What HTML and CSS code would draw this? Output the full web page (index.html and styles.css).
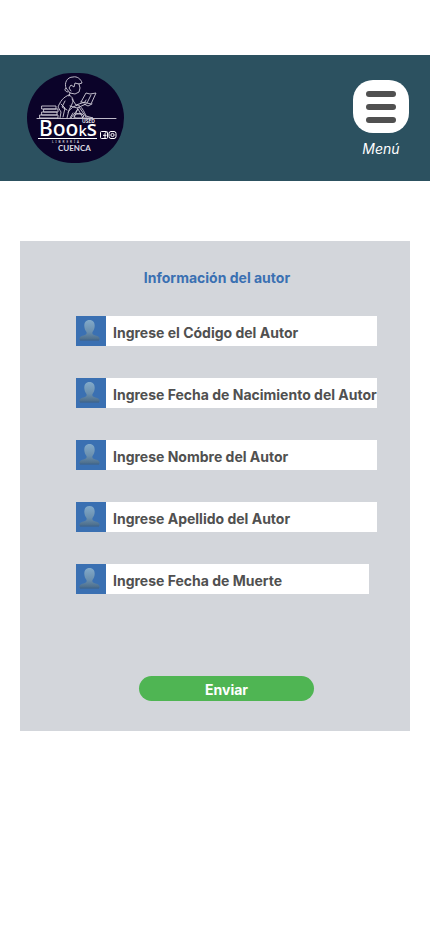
FILE: index.html
```html
<!DOCTYPE html>
<html lang="es">
<head>
  <meta charset="utf-8">
  <meta name="viewport" content="width=device-width, initial-scale=1">
  <title>Información del autor</title>
  <link rel="stylesheet" href="styles.css">
</head>
<body>
  <svg class="defs" aria-hidden="true">
    <defs>
      <linearGradient id="skin" x1="0" y1="0" x2="0" y2="1">
        <stop offset="0" stop-color="#82aaca"/>
        <stop offset="0.6" stop-color="#6a8fae"/>
        <stop offset="1" stop-color="#4b6c8a"/>
      </linearGradient>
      <symbol id="person" viewBox="0 0 30 30">
        <path fill="url(#skin)" d="M13.500 4c3.600 0 5.300 2.500 5.200 6-.1 2.600-1 4.600-2.200 6-.3 1.300-.1 2 .6 2.500 1.300.8 3.200 1 4.600 1.800 1.300.7 2 1.800 2 3.400H3.300c0-1.600.7-2.700 2-3.400 1.400-.8 3.300-1 4.600-1.800.7-.5.9-1.200.6-2.500-1.200-1.400-2.100-3.400-2.200-6-.1-3.500 1.600-6 5.200-6z"/>
        <path fill="#42617f" d="M4 23.700h19v.8H4z"/>
      </symbol>
    </defs>
  </svg>

  <header class="topbar">
    <a class="brand" href="#" aria-label="Used Books Librería Cuenca">
      <svg class="logo" viewBox="0 0 97 90">
        <g class="sketch">
          <path d="M39 15c-2-5 1-11 7-11 4-1 8 2 9 6l-3 1-4-1-1 4-3-2-2 3 2 3"/>
          <path d="M52 11l1 4-1 4-4 2-5-1-4-5c-2 1-1 4 2 4M43 20l-1 3"/>
          <path d="M42 22c-6 2-9 7-11 12l3 5-1 6M42 22c4 2 5 5 3 9l-3 6-2 8M45 26l4 6 9-3 1-2M43 33l7 2 9-4M34 31l4 4-2 9M38 28l-3 6 5 3"/>
          <path d="M41 39c3-4 6-6 10-7 3 1 6 6 8 11l7 2H56l-5-9-7 9M47 45l4-10M46 40l-3 5M52 34l7 10"/>
          <path d="M54 29l5-9 4 1 6-1-5 11-4-1-6-1M60 30l4-8M57 31l4 2 4-2"/>
          <path d="M47 43c0-3 8-4 10 0l-2 2h-6zM49 41h6"/>
          <path d="M15 33h14v3H15zM17 36h14v3H17zM15 39h15v3H15zM13 42h18v3H13z"/>
          <path d="M10 45.500h79"/>
        </g>
        <text class="logo-books" x="12" y="63">Boo<tspan class="logo-k">k</tspan>s</text>
        <text class="logo-used" x="55" y="50">USED</text>
        <path class="rule" d="M11 65.500h59"/>
        <text class="logo-sub" x="25" y="70">LIBRERÍA</text>
        <text class="logo-city" x="31" y="78">CUENCA</text>
        <g class="social">
          <rect x="73.500" y="58.500" width="7" height="7" rx="1"/>
          <path d="M78 65.500v-5q0-1 1.500-1M76 62.300h3.500"/>
          <rect x="82" y="58.500" width="7" height="7" rx="2"/>
          <circle cx="85.500" cy="62" r="1.600"/>
        </g>
      </svg>
    </a>
    <div class="menu">
      <button class="menu-button" type="button" aria-labelledby="menu-label">
        <span class="bar"></span><span class="bar"></span><span class="bar"></span>
      </button>
      <span class="menu-label" id="menu-label">Menú</span>
    </div>
  </header>

  <main>
    <form class="card">
      <h1 class="title">Información del autor</h1>
      <div class="fields">
        <div class="field">
          <label class="icon" for="codigo" aria-label="Código del Autor"><svg><use href="#person"/></svg></label>
          <input id="codigo" type="text" placeholder="Ingrese el Código del Autor">
        </div>
        <div class="field">
          <label class="icon" for="nacimiento" aria-label="Fecha de Nacimiento del Autor"><svg><use href="#person"/></svg></label>
          <input id="nacimiento" type="text" placeholder="Ingrese Fecha de Nacimiento del Autor">
        </div>
        <div class="field">
          <label class="icon" for="nombre" aria-label="Nombre del Autor"><svg><use href="#person"/></svg></label>
          <input id="nombre" type="text" placeholder="Ingrese Nombre del Autor">
        </div>
        <div class="field">
          <label class="icon" for="apellido" aria-label="Apellido del Autor"><svg><use href="#person"/></svg></label>
          <input id="apellido" type="text" placeholder="Ingrese Apellido del Autor">
        </div>
        <div class="field field-short">
          <label class="icon" for="muerte" aria-label="Fecha de Muerte"><svg><use href="#person"/></svg></label>
          <input id="muerte" type="text" placeholder="Ingrese Fecha de Muerte">
        </div>
      </div>
      <button class="submit" type="submit">Enviar</button>
    </form>
  </main>
</body>
</html>
```
FILE: styles.css
```css
* {
  box-sizing: border-box;
}

body {
  margin: 0;
  padding-top: 55px;
  background: #fff;
  font-family: Inter, "Liberation Sans", sans-serif;
  font-size: 14px;
  color: #505050;
}

.defs {
  position: absolute;
  width: 0;
  height: 0;
}

.topbar {
  display: flex;
  justify-content: space-between;
  align-items: flex-start;
  padding: 18px 21px 18px 27px;
  background: #2c5160;
}

.brand {
  display: block;
  overflow: hidden;
  width: 97px;
  height: 90px;
  border-radius: 45px;
  background: #0b0329;
}

.logo {
  display: block;
  width: 100%;
  height: 100%;
}

.sketch {
  fill: none;
  stroke: #d2cfda;
  stroke-width: 0.9;
  stroke-linejoin: round;
  stroke-linecap: round;
}

.logo text {
  fill: #fff;
}

.logo-books {
  font: 500 21px "Noto Sans", sans-serif;
}

.logo-k {
  font-size: 15px;
}

.logo-used {
  font: 600 5px "Noto Sans", sans-serif;
}

.logo-sub {
  font: 3px "Noto Sans", sans-serif;
  letter-spacing: 2px;
}

.logo .logo-city {
  font: 700 8px Lato, sans-serif;
  fill: #dddbe3;
}

.rule {
  stroke: #fff;
  stroke-width: 1;
}

.social {
  fill: none;
  stroke: #fff;
  stroke-width: 1;
}

.menu {
  display: flex;
  flex-direction: column;
  align-items: center;
  gap: 7px;
  padding-top: 7px;
}

.menu-button {
  display: flex;
  flex-direction: column;
  justify-content: center;
  align-items: center;
  gap: 7px;
  width: 56px;
  height: 53px;
  padding: 0;
  border: 0;
  border-radius: 20px;
  background: #fff;
}

.bar {
  width: 30px;
  height: 6px;
  border-radius: 3px;
  background: #505050;
}

.menu-label {
  line-height: 17px;
  font-style: italic;
  color: #fff;
}

.card {
  display: flex;
  flex-direction: column;
  margin: 60px 20px;
  padding: 28px 33px 30px 56px;
  background: #d3d6db;
}

.title {
  margin: 0 0 29px;
  padding-right: 19px;
  font-size: 14px;
  line-height: 18px;
  font-weight: 700;
  text-align: center;
  color: #3a70b2;
}

.fields {
  display: flex;
  flex-direction: column;
  gap: 32px;
}

.field {
  display: flex;
  height: 30px;
}

.field-short {
  margin-right: 8px;
}

.icon {
  flex: none;
  width: 30px;
  background: #3a70b2;
}

.icon svg {
  display: block;
  width: 30px;
  height: 30px;
}

.field input {
  flex: 1;
  min-width: 0;
  padding: 2px 0 0 7px;
  border: 0;
  border-radius: 0;
  background: #fff;
  font: inherit;
  font-weight: 700;
  color: #505050;
}

.field input::placeholder {
  color: #505050;
  opacity: 1;
}

.submit {
  align-self: center;
  width: 175px;
  height: 25px;
  margin-top: 82px;
  padding: 2px 0 0;
  border: 0;
  border-radius: 13px;
  background: #4fb553;
  font: inherit;
  font-weight: 700;
  color: #fff;
}
```
